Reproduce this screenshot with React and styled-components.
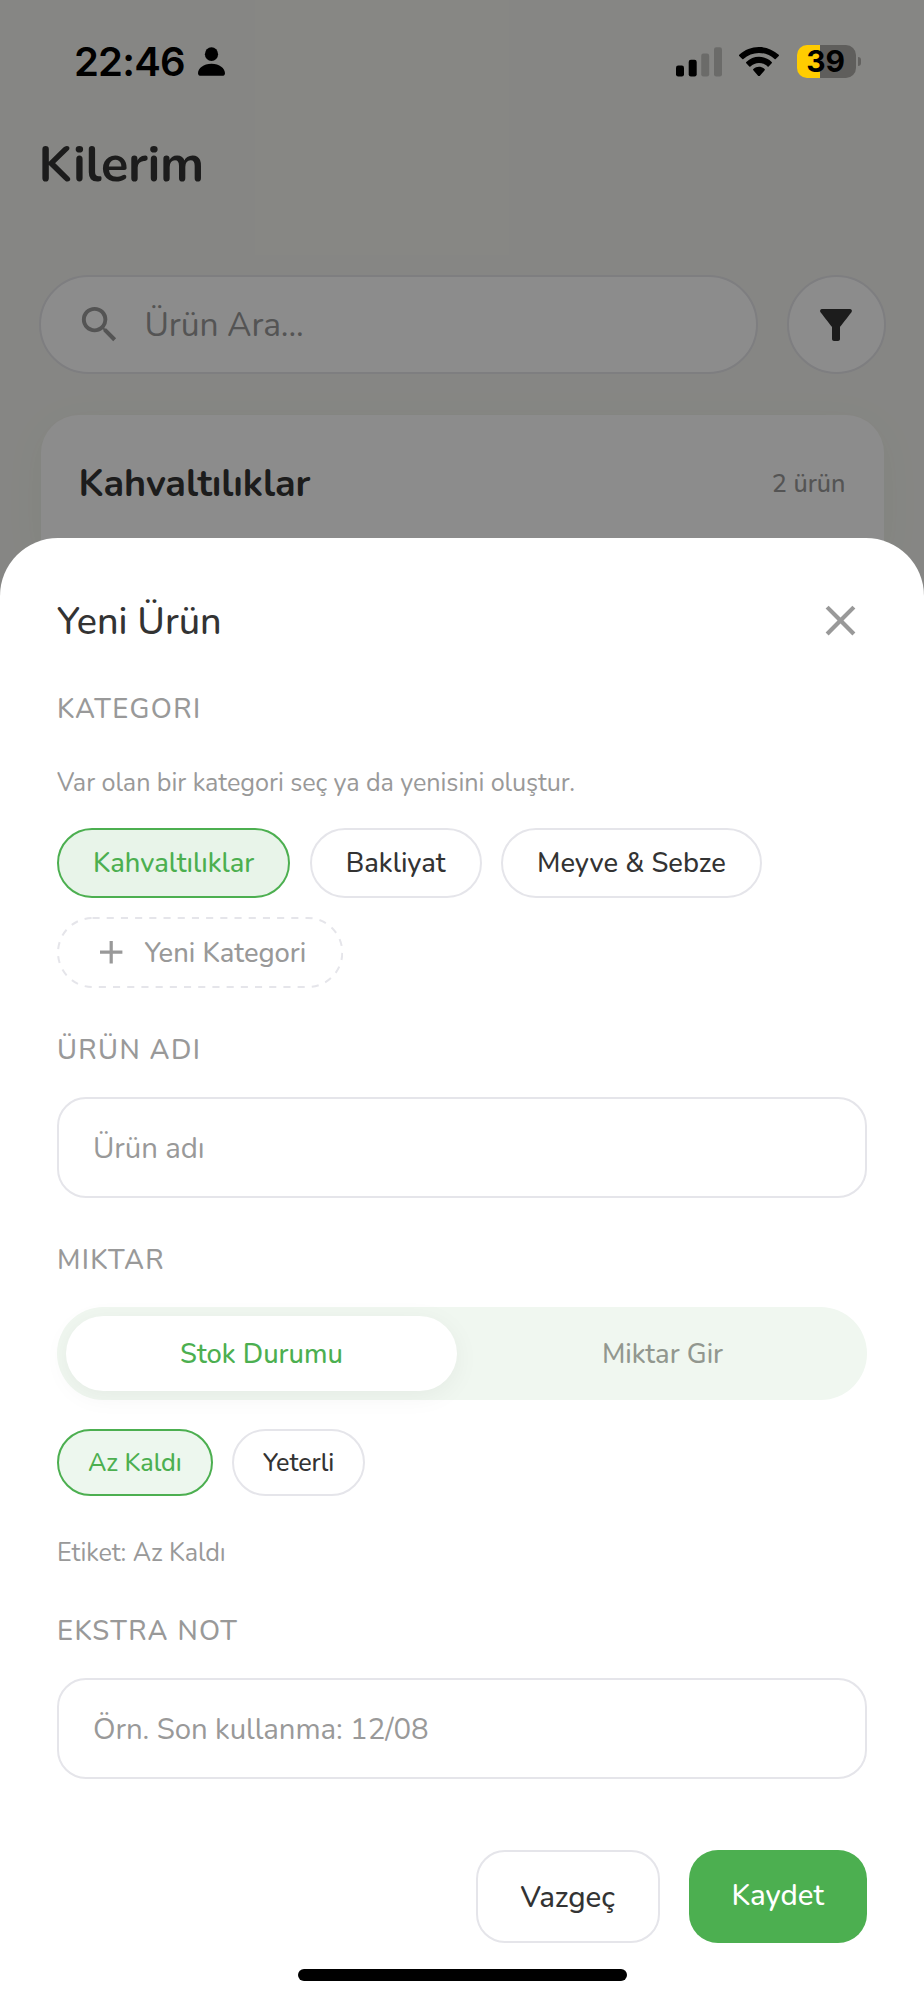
import React, { useState } from "react";
import styled, { createGlobalStyle } from "styled-components";
import { MdAdd, MdClose, MdFilterAlt, MdSearch } from "react-icons/md";

const CATEGORIES = ["Kahvaltılıklar", "Bakliyat", "Meyve & Sebze"];
const STOCK_LEVELS = ["Az Kaldı", "Yeterli"];
const BATTERY = 39;

function StatusBar() {
  return (
    <StatusRow>
      <StatusGroup>
        <Time>22:46</Time>
        <svg width="27" height="29" viewBox="0 0 27 29">
          <ellipse cx="13.5" cy="7.2" rx="6.6" ry="6.9" />
          <path d="M3 28.8C1 28.8 0 27.8 0 26.2C0 21.5 5.5 16.8 13.5 16.8S27 21.5 27 26.2c0 1.6-1 2.6-3 2.6z" />
        </svg>
      </StatusGroup>
      <StatusGroup>
        <svg width="46" height="30" viewBox="0 0 46 30">
          <rect x="0" y="18.5" width="8" height="11" rx="2.2" />
          <rect x="12.7" y="12.8" width="8" height="16.7" rx="2.2" />
          <rect x="25.2" y="6.6" width="8" height="22.9" rx="2.2" opacity="0.2" />
          <rect x="38" y="0.3" width="8" height="29.2" rx="2.2" opacity="0.2" />
        </svg>
        <WifiIcon width="40" height="29.5" viewBox="0 0 17.15 12.34" preserveAspectRatio="none">
          <path d="M8.571 2.466c2.487 0 4.88.922 6.682 2.576.136.127.353.126.486-.004l1.298-1.263a.345.345 0 0 0-.003-.494C12.303-1.094 4.839-1.094.108 3.281a.345.345 0 0 0-.003.494l1.298 1.263c.133.13.35.132.486.004 1.803-1.654 4.195-2.576 6.682-2.576zM8.568 6.687c1.357 0 2.666.511 3.672 1.435.136.132.35.129.483-.006l1.288-1.319a.37.37 0 0 0-.006-.519c-3.063-2.891-7.808-2.891-10.872 0a.37.37 0 0 0-.005.519l1.287 1.319c.133.135.347.138.483.006 1.006-.923 2.314-1.435 3.67-1.435zM11.092 9.48a.4.4 0 0 1-.102.281l-2.177 2.455a.32.32 0 0 1-.483 0L6.153 9.761a.4.4 0 0 1 .011-.557c1.39-1.312 3.426-1.312 4.816 0a.4.4 0 0 1 .112.276z" />
        </WifiIcon>
        <Battery>
          <BatteryBody>{BATTERY}</BatteryBody>
          <BatteryTip />
        </Battery>
      </StatusGroup>
    </StatusRow>
  );
}

function App() {
  const [category, setCategory] = useState(CATEGORIES[0]);
  const [mode, setMode] = useState("stock");
  const [stock, setStock] = useState(STOCK_LEVELS[0]);
  const [form, setForm] = useState({ name: "", note: "" });

  const handleChange = (e) => {
    setForm({ ...form, [e.target.name]: e.target.value });
  };

  return (
    <Screen>
      <GlobalStyle />
      <StatusBar />

      <Pantry>
        <PageTitle>Kilerim</PageTitle>
        <SearchRow>
          <SearchBox>
            <MdSearch size={47} />
            <span>Ürün Ara...</span>
          </SearchBox>
          <FilterButton>
            <MdFilterAlt size={48} />
          </FilterButton>
        </SearchRow>
        <CategoryCard>
          <CategoryName>Kahvaltılıklar</CategoryName>
          <CategoryCount>2 ürün</CategoryCount>
        </CategoryCard>
      </Pantry>

      <Backdrop>
        <Sheet>
          <SheetHeader>
            <SheetTitle>Yeni Ürün</SheetTitle>
            <CloseButton>
              <MdClose size={51} />
            </CloseButton>
          </SheetHeader>

          <Label $top={40}>KATEGORI</Label>
          <Hint $top={39}>Var olan bir kategori seç ya da yenisini oluştur.</Hint>
          <ChipRow $top={28}>
            {CATEGORIES.map((item) => (
              <Chip key={item} $active={item === category} onClick={() => setCategory(item)}>
                {item}
              </Chip>
            ))}
            <NewChip>
              <DashedOutline>
                <rect x="1" y="1" rx="34.5" />
              </DashedOutline>
              <MdAdd size={38.4} />
              Yeni Kategori
            </NewChip>
          </ChipRow>

          <Label $top={44}>ÜRÜN ADI</Label>
          <Input name="name" placeholder="Ürün adı" value={form.name} onChange={handleChange} />

          <Label $top={44}>MIKTAR</Label>
          <Segment>
            <SegmentItem $active={mode === "stock"} onClick={() => setMode("stock")}>
              Stok Durumu
            </SegmentItem>
            <SegmentItem $active={mode === "amount"} onClick={() => setMode("amount")}>
              Miktar Gir
            </SegmentItem>
          </Segment>
          <ChipRow $top={29}>
            {STOCK_LEVELS.map((item) => (
              <SmallChip key={item} $active={item === stock} onClick={() => setStock(item)}>
                {item}
              </SmallChip>
            ))}
          </ChipRow>
          <Hint $top={40}>Etiket: {stock}</Hint>

          <Label $top={43}>EKSTRA NOT</Label>
          <Input
            name="note"
            placeholder="Örn. Son kullanma: 12/08"
            value={form.note}
            onChange={handleChange}
          />

          <Actions>
            <CancelButton>Vazgeç</CancelButton>
            <SaveButton>Kaydet</SaveButton>
          </Actions>
          <HomeIndicator />
        </Sheet>
      </Backdrop>
    </Screen>
  );
}

export default App;

const GlobalStyle = createGlobalStyle`
  * {
    box-sizing: border-box;
  }

  body {
    margin: 0;
  }

  body, button, input {
    font-family: Nunito, Lato, sans-serif;
  }

  button {
    padding: 0;
    border: none;
    background: none;
    color: inherit;
  }

  svg {
    display: block;
    flex-shrink: 0;
  }
`;

const Screen = styled.div`
  position: relative;
  width: 924px;
  height: 2000px;
  overflow: hidden;
  background: #f5f5f0;
  color: #333;
`;

/* stays above the backdrop */
const StatusRow = styled.div`
  position: relative;
  z-index: 2;
  display: flex;
  justify-content: space-between;
  align-items: center;
  height: 123px;
  padding: 0 63px 0 74px;
  color: #000;
`;

const StatusGroup = styled.div`
  display: flex;
  align-items: center;
`;

const Time = styled.span`
  margin-right: 13px;
  font-family: Inter, sans-serif;
  font-size: 40px;
  font-weight: 600;
  letter-spacing: -0.8px;
`;

const WifiIcon = styled.svg`
  margin: 0 18px 0 17px;
`;

const Battery = styled.div`
  display: flex;
  align-items: center;
  gap: 2px;
`;

const BatteryBody = styled.div`
  display: flex;
  align-items: center;
  justify-content: center;
  width: 59px;
  height: 33px;
  padding-right: 2px;
  border-radius: 10px;
  background: linear-gradient(to right, #fc0 ${BATTERY}%, #5f5e5c ${BATTERY}%);
  font-family: Inter, sans-serif;
  font-size: 30px;
  font-weight: 650;
  letter-spacing: -0.2px;
  line-height: 33px;
`;

const BatteryTip = styled.div`
  width: 3px;
  height: 9px;
  border-radius: 0 4px 4px 0;
  background: #62615f;
`;

const Pantry = styled.div`
  padding: 7px 38.5px 0;
`;

const PageTitle = styled.h1`
  margin: 0;
  font-size: 50.4px;
  font-weight: 700;
  line-height: 70px;
  letter-spacing: -0.3px;
`;

const SearchRow = styled.div`
  display: flex;
  justify-content: space-between;
  margin-top: 75px;
`;

const SearchBox = styled.div`
  display: flex;
  align-items: center;
  gap: 22px;
  width: 719px;
  height: 99px;
  padding-left: 35px;
  border: 2px solid #e5e5ea;
  border-radius: 50px;
  background: #fff;
  color: #999;
  font-size: 33.6px;
  letter-spacing: -0.1px;
`;

const FilterButton = styled.button`
  display: flex;
  align-items: center;
  justify-content: center;
  width: 99px;
  height: 99px;
  border: 2px solid #e5e5ea;
  border-radius: 50%;
  background: #fff;
`;

const CategoryCard = styled.div`
  display: flex;
  justify-content: space-between;
  align-items: center;
  height: 138px;
  margin: 40.5px 2px 0;
  padding: 0 38px;
  border-radius: 38px 38px 0 0;
  background: #fff;
  box-shadow: 0 8px 40px rgba(76, 175, 80, 0.06);
`;

const CategoryName = styled.h2`
  margin: 0;
  font-size: 37.8px;
  font-weight: 700;
  letter-spacing: -0.1px;
`;

const CategoryCount = styled.span`
  color: #999;
  font-size: 25.2px;
  font-weight: 500;
`;

const Backdrop = styled.div`
  position: absolute;
  inset: 0;
  display: flex;
  flex-direction: column;
  justify-content: flex-end;
  background: rgba(0, 0, 0, 0.45);
`;

const Sheet = styled.div`
  height: 1462px;
  padding: 53px 57px 0;
  border-radius: 58px 58px 0 0;
  background: #fff;
`;

const SheetHeader = styled.div`
  display: flex;
  justify-content: space-between;
  align-items: center;
  height: 60px;
`;

const SheetTitle = styled.h2`
  margin: 0;
  font-size: 37.8px;
  font-weight: 500;
`;

const CloseButton = styled.button`
  margin: 0 1px 1px 0;
  color: #999;
`;

const Label = styled.div`
  margin-top: ${(p) => p.$top}px;
  color: #999;
  font-size: 27.3px;
  font-weight: 500;
  line-height: 36px;
  letter-spacing: 1.38px;
`;

const Hint = styled.p`
  margin: ${(p) => p.$top}px 0 0;
  color: #999;
  font-size: 25.2px;
  line-height: 34px;
  letter-spacing: -0.06px;
`;

const ChipRow = styled.div`
  display: flex;
  flex-wrap: wrap;
  gap: 19px 19.5px;
  margin-top: ${(p) => p.$top}px;
`;

const Chip = styled.button`
  height: 70px;
  padding: 0 34px;
  border: 2px solid ${(p) => (p.$active ? "#4caf50" : "#e5e5ea")};
  border-radius: 35px;
  background: ${(p) => (p.$active ? "#e8f4e9" : "#fff")};
  color: ${(p) => (p.$active ? "#4caf50" : "#333")};
  font-size: 27.3px;
  font-weight: 500;
`;

const SmallChip = styled(Chip)`
  height: 67px;
  padding: 0 29px;
  background: ${(p) => (p.$active ? "#edf7ee" : "#fff")};
  font-size: 25.2px;
  letter-spacing: -0.1px;
`;

const NewChip = styled.button`
  position: relative;
  display: flex;
  align-items: center;
  gap: 14px;
  height: 71px;
  padding: 0 37px 0 35px;
  color: #999;
  font-size: 27.3px;
  font-weight: 500;
`;

const DashedOutline = styled.svg`
  position: absolute;
  inset: 0;
  width: 100%;
  height: 100%;

  rect {
    width: calc(100% - 2px);
    height: calc(100% - 2px);
    fill: none;
    stroke: #e5e5ea;
    stroke-width: 2;
    stroke-dasharray: 7.1 7.1;
  }
`;

const Input = styled.input`
  display: block;
  width: 100%;
  height: 101px;
  margin-top: 29px;
  padding: 0 34px;
  border: 2px solid #e5e5ea;
  border-radius: 29px;
  outline: none;
  background: #fff;
  color: #333;
  font-size: 29.4px;
  letter-spacing: -0.08px;

  &::placeholder {
    color: #999;
  }
`;

const Segment = styled.div`
  display: flex;
  gap: 10px;
  height: 93px;
  margin-top: 29px;
  padding: 9px;
  border-radius: 47px;
  background: #f0f7f0;
`;

const SegmentItem = styled.button`
  flex: 1;
  border-radius: 38px;
  background: ${(p) => (p.$active ? "#fff" : "transparent")};
  box-shadow: ${(p) => (p.$active ? "0 5px 26px rgba(0, 0, 0, 0.05)" : "none")};
  color: ${(p) => (p.$active ? "#4caf50" : "#92978f")};
  font-size: 27.3px;
  font-weight: 500;
`;

const Actions = styled.div`
  display: flex;
  justify-content: flex-end;
  gap: 28.5px;
  margin-top: 71px;
`;

const CancelButton = styled.button`
  width: 184.5px;
  height: 93px;
  border: 2px solid #e5e5ea;
  border-radius: 29px;
  font-size: 29.4px;
  font-weight: 500;
`;

const SaveButton = styled.button`
  width: 178.5px;
  height: 93px;
  padding-bottom: 4px;
  border-radius: 29px;
  background: #4caf50;
  color: #fff;
  font-size: 29.4px;
  font-weight: 500;
`;

const HomeIndicator = styled.div`
  width: 329px;
  height: 12px;
  margin: 26px auto 0;
  border-radius: 6px;
  background: #000;
`;
